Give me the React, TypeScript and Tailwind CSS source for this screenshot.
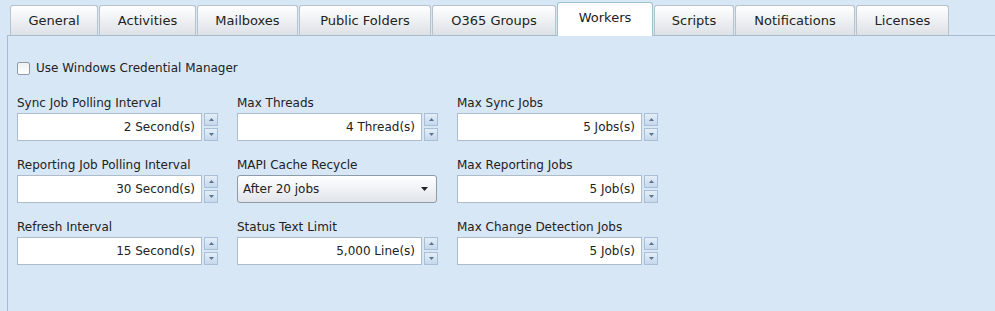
import React from 'react';

const TABS = ['General', 'Activities', 'Mailboxes', 'Public Folders', 'O365 Groups', 'Workers', 'Scripts', 'Notifications', 'Licenses'];
const TAB_WIDTHS = ['w-[88px]', 'w-[97px]', 'w-[101px]', 'w-[132px]', 'w-[124px]', 'w-[96px]', 'w-[80px]', 'w-[120px]', 'w-[93px]'];

type Field =
  | { kind: 'spin'; label: string; value: string }
  | { kind: 'select'; label: string; value: string };

const FIELDS: Field[] = [
  { kind: 'spin', label: 'Sync Job Polling Interval', value: '2 Second(s)' },
  { kind: 'spin', label: 'Max Threads', value: '4 Thread(s)' },
  { kind: 'spin', label: 'Max Sync Jobs', value: '5 Jobs(s)' },
  { kind: 'spin', label: 'Reporting Job Polling Interval', value: '30 Second(s)' },
  { kind: 'select', label: 'MAPI Cache Recycle', value: 'After 20 jobs' },
  { kind: 'spin', label: 'Max Reporting Jobs', value: '5 Job(s)' },
  { kind: 'spin', label: 'Refresh Interval', value: '15 Second(s)' },
  { kind: 'spin', label: 'Status Text Limit', value: '5,000 Line(s)' },
  { kind: 'spin', label: 'Max Change Detection Jobs', value: '5 Job(s)' },
];

function SpinArrow({ up }: { up?: boolean }) {
  return (
    <svg width="5" height="3" viewBox="0 0 5 3">
      <path d={up ? 'M0 3 L2.5 0 L5 3 Z' : 'M0 0 L2.5 3 L5 0 Z'} fill="#5b7590" />
    </svg>
  );
}

function SpinInput({ value }: { value: string }) {
  return (
    <div className="flex h-[28px] gap-[2px]">
      <div className="flex w-[185px] items-center justify-end border border-[#aebbc8] bg-white pr-[6px] text-[12px] text-[#222]">
        {value}
      </div>
      <div className="flex w-[14px] flex-col gap-[2px]">
        <div className="flex h-[13px] items-center justify-center border border-[#a8bfd6] bg-gradient-to-b from-[#e4eef8] to-[#c5d8ec]">
          <SpinArrow up />
        </div>
        <div className="flex h-[13px] items-center justify-center border border-[#a8bfd6] bg-gradient-to-b from-[#e4eef8] to-[#c5d8ec]">
          <SpinArrow />
        </div>
      </div>
    </div>
  );
}

function SelectBox({ value }: { value: string }) {
  return (
    <div className="flex h-[28px] w-[200px] items-center justify-between rounded-[3px] border border-[#8d9aa8] bg-gradient-to-b from-white to-[#e1e5ea] pl-[5px] pr-[8px] text-[12px] text-[#222]">
      <span>{value}</span>
      <svg width="7" height="4" viewBox="0 0 7 4">
        <path d="M0 0 L3.5 4 L7 0 Z" fill="#222" />
      </svg>
    </div>
  );
}

export default function App() {
  return (
    <div className="h-[311px] w-[995px] overflow-hidden bg-[#d8e7f6] pl-[7px] font-['DejaVu_Sans',sans-serif] text-[#222]">
      {/* Tab strip */}
      <div className="flex h-[36px] items-end gap-[1px] border-b border-[#a9bccf] pl-[3px]">
        {TABS.map((tab, i) => {
          const active = tab === 'Workers';
          return (
            <div
              key={tab}
              className={`flex items-center justify-center rounded-t-[3px] border border-b-0 text-[13px] ${TAB_WIDTHS[i]} ${
                active
                  ? '-mb-px h-[34px] border-[#9cc3cf] bg-white pb-[4px]'
                  : 'h-[30px] border-[#b8c2cc] bg-gradient-to-b from-white to-[#dde1e6]'
              }`}
            >
              {tab}
            </div>
          );
        })}
      </div>

      {/* Panel */}
      <div className="h-[275px] border-l border-[#a9bccf] pl-[9px] pt-[23px]">
        <label className="flex items-center gap-[6px] text-[12px]">
          <span className="block h-[13px] w-[13px] rounded-[2px] border border-[#8f9aa6] bg-gradient-to-b from-[#f0f0f0] to-white" />
          Use Windows Credential Manager
        </label>

        <div className="mt-[19px] grid grid-cols-[220px_220px_220px] gap-y-[17px]">
          {FIELDS.map((f) => (
            <div key={f.label} className="flex flex-col gap-[3px]">
              <div className="h-[14px] text-[12px] leading-[14px]">{f.label}</div>
              {f.kind === 'spin' ? <SpinInput value={f.value} /> : <SelectBox value={f.value} />}
            </div>
          ))}
        </div>
      </div>
    </div>
  );
}
